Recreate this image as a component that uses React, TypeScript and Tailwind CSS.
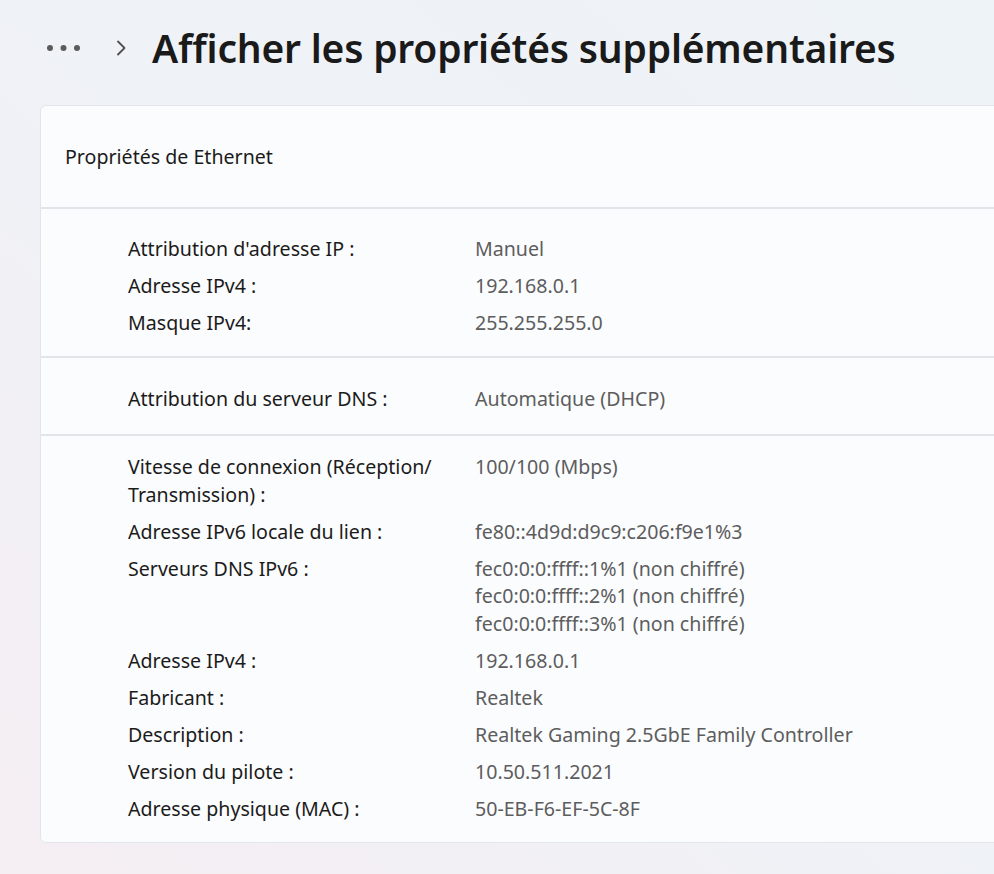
const FONT = "font-['Noto_Sans','Open_Sans',sans-serif]";

type Row = { label: string[]; value: string[] };

const SECTIONS: { rows: Row[]; pad: string }[] = [
  {
    pad: "pt-[26px] pb-[19px]",
    rows: [
      { label: ["Attribution d'adresse IP :"], value: ["Manuel"] },
      { label: ["Adresse IPv4 :"], value: ["192.168.0.1"] },
      { label: ["Masque IPv4:"], value: ["255.255.255.0"] },
    ],
  },
  {
    pad: "pt-[27px] pb-[22px]",
    rows: [{ label: ["Attribution du serveur DNS :"], value: ["Automatique (DHCP)"] }],
  },
  {
    pad: "pt-[17px] pb-[20px]",
    rows: [
      { label: ["Vitesse de connexion (Réception/", "Transmission) :"], value: ["100/100 (Mbps)"] },
      { label: ["Adresse IPv6 locale du lien :"], value: ["fe80::4d9d:d9c9:c206:f9e1%3"] },
      {
        label: ["Serveurs DNS IPv6 :"],
        value: [
          "fec0:0:0:ffff::1%1 (non chiffré)",
          "fec0:0:0:ffff::2%1 (non chiffré)",
          "fec0:0:0:ffff::3%1 (non chiffré)",
        ],
      },
      { label: ["Adresse IPv4 :"], value: ["192.168.0.1"] },
      { label: ["Fabricant :"], value: ["Realtek"] },
      { label: ["Description :"], value: ["Realtek Gaming 2.5GbE Family Controller"] },
      { label: ["Version du pilote :"], value: ["10.50.511.2021"] },
      { label: ["Adresse physique (MAC) :"], value: ["50-EB-F6-EF-5C-8F"] },
    ],
  },
];

function PropRow({ row }: { row: Row }) {
  return (
    <div className="flex text-[19.6px] leading-[27.5px]">
      <div className="w-[347px] shrink-0 text-[#1b1b1b]">
        {row.label.map((l) => (
          <div key={l}>{l}</div>
        ))}
      </div>
      <div className="text-[#5d5d5d]">
        {row.value.map((v) => (
          <div key={v}>{v}</div>
        ))}
      </div>
    </div>
  );
}

export default function App() {
  return (
    <div
      className={`${FONT} w-[994px] h-[874px] overflow-hidden bg-gradient-to-tr from-[#f5eef2] via-[#eff2f7] to-[#eef3f8]`}
    >
      {/* Breadcrumb */}
      <div className="flex items-center h-[96px] pl-[47px]">
        <svg width="34" height="8" viewBox="0 0 34 8" className="text-[#5c5c5c]">
          <circle cx="3" cy="4" r="3" fill="currentColor" />
          <circle cx="16.5" cy="4" r="3" fill="currentColor" />
          <circle cx="30" cy="4" r="3" fill="currentColor" />
        </svg>
        <svg width="12" height="16" viewBox="0 0 12 16" className="ml-[34px] text-[#4f4f4f]">
          <path d="M3 1.5 L9.5 8 L3 14.5" fill="none" stroke="currentColor" strokeWidth="1.8" strokeLinecap="round" strokeLinejoin="round" />
        </svg>
        <h1 className="ml-[25px] text-[39px] font-semibold text-[#1a1a1a] tracking-[-0.2px] leading-none pb-[2px]">
          Afficher les propriétés supplémentaires
        </h1>
      </div>

      {/* Card */}
      <div className="ml-[40px] mt-[9px] w-[1000px] rounded-[6px] border border-[#e2e5e9] bg-[#fbfcfd]/95">
        <div className="h-[101px] flex items-center pl-[24px] text-[19.6px] text-[#1b1b1b]">
          Propriétés de Ethernet
        </div>
        {SECTIONS.map((s, i) => (
          <div
            key={i}
            className={`border-t-2 border-[#e0e5ea] pl-[87px] ${s.pad} flex flex-col gap-[9.5px]`}
          >
            {s.rows.map((r, j) => (
              <PropRow key={j} row={r} />
            ))}
          </div>
        ))}
      </div>
    </div>
  );
}
